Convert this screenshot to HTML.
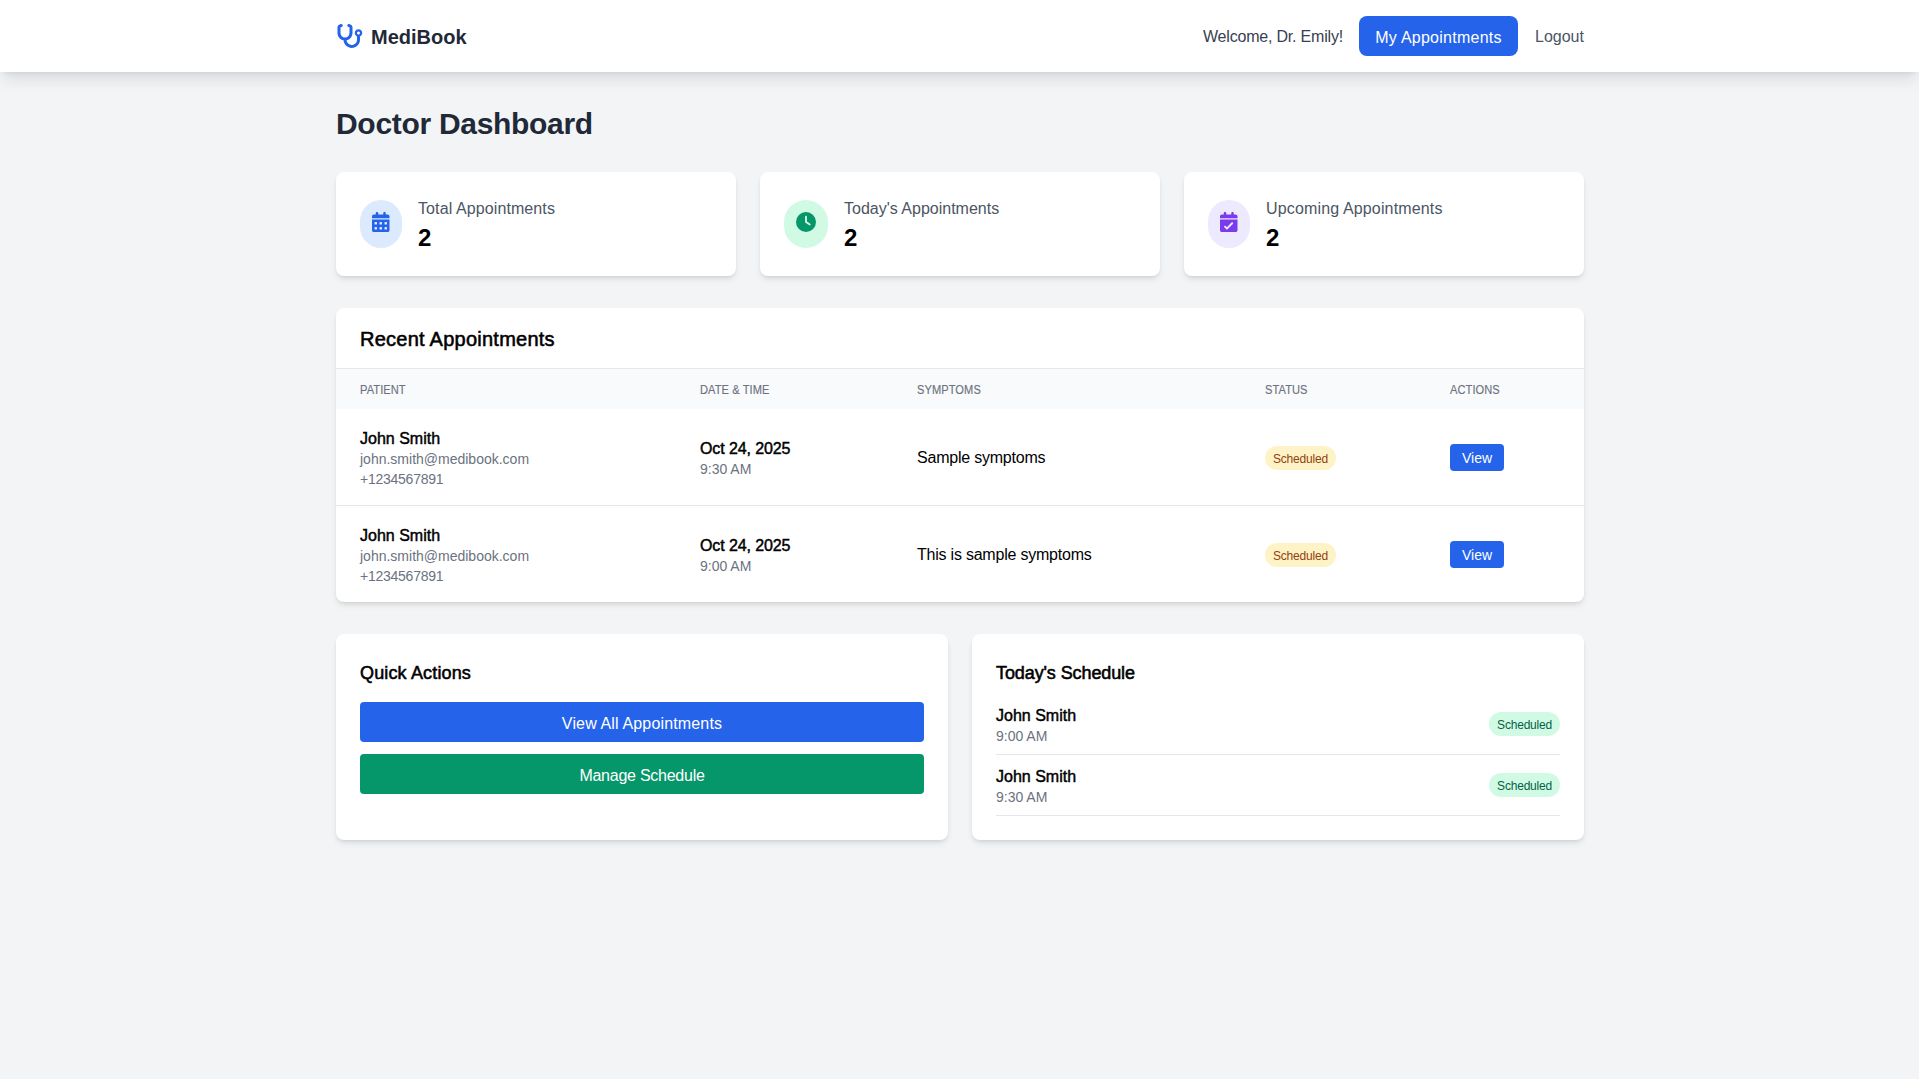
<!DOCTYPE html>
<html>
<head>
<meta charset="utf-8">
<style>
*{box-sizing:border-box;margin:0;padding:0}
html,body{width:1919px;height:1079px;overflow:hidden}
body{background:#f3f4f6;font-family:"Liberation Sans",sans-serif;color:#000;position:relative}
.nav{position:absolute;left:0;top:0;width:1919px;height:72px;background:#fff;box-shadow:0 10px 15px -3px rgba(0,0,0,.1),0 4px 6px -4px rgba(0,0,0,.1);z-index:2}
.abs{position:absolute;white-space:nowrap}
.logo-icon{position:absolute;left:336px;top:24px;width:27px;height:24px}
.brand{left:371px;top:23px;font-size:20px;font-weight:700;color:#1f2937;line-height:28px}
.welcome{left:1203px;top:25px;letter-spacing:-.2px;font-size:16px;line-height:24px;color:#374151}
.btn-nav{position:absolute;left:1359px;top:16px;width:159px;height:40px;background:#2563eb;border-radius:8px;color:#fff;font-size:16px;line-height:40px;padding-top:2px;letter-spacing:.25px;text-align:center}
.logout{left:1535px;top:25px;font-size:16px;line-height:24px;color:#4b5563}
.title{left:336px;top:106px;letter-spacing:-.3px;font-size:30px;line-height:36px;font-weight:700;color:#1f2937}
.card{position:absolute;background:#fff;border-radius:8px;box-shadow:0 4px 6px -1px rgba(0,0,0,.1),0 2px 4px -2px rgba(0,0,0,.1)}
.stat{top:172px;width:400px;height:104px}
.circ{position:absolute;top:28px;height:48px;border-radius:9999px}
.circ svg{position:absolute;top:12px;height:20px}
.slabel{position:absolute;top:25px;font-size:16px;line-height:24px;color:#4b5563;white-space:nowrap}
.snum{position:absolute;top:50px;font-size:24px;line-height:32px;font-weight:700;color:#000}

.rc{left:336px;top:308px;width:1248px;height:294px;overflow:hidden}
.rc-h{position:absolute;left:0;top:0;width:1248px;height:61px;border-bottom:1px solid #e5e7eb}
.h2{position:absolute;font-size:20px;line-height:28px;font-weight:400;color:#000;-webkit-text-stroke:.55px #000;white-space:nowrap}
.thead{position:absolute;left:0;top:61px;width:1248px;height:40px;background:#f9fafb}
.th{position:absolute;top:13px;font-size:12.3px;line-height:16px;color:#6b7280;letter-spacing:.1px;transform:scaleX(.9);transform-origin:0 0;-webkit-text-stroke:.15px #6b7280;white-space:nowrap}
.row{position:absolute;left:0;width:1248px;height:97px}
.row.b{border-bottom:1px solid #e5e7eb}
.nm{position:absolute;font-size:16px;line-height:24px;font-weight:400;color:#000;-webkit-text-stroke:.45px #000;margin-top:2px;white-space:nowrap}
.sub{position:absolute;font-size:14px;line-height:20px;color:#6b7280;white-space:nowrap}
.txt{position:absolute;font-size:16px;line-height:24px;color:#000;letter-spacing:-.22px;margin-top:1px;white-space:nowrap}
.badge{position:absolute;height:24px;padding:0 8px;border-radius:9999px;font-size:12px;line-height:24px;padding-top:1px;letter-spacing:-.2px;white-space:nowrap}
.by{background:#fef3c7;color:#92400e}
.bg{background:#d1fae5;color:#065f46}
.vbtn{position:absolute;width:54px;height:27px;background:#2563eb;color:#fff;border-radius:4px;font-size:14px;line-height:28px;text-align:center}
.bc{top:634px;width:612px;height:206px}
.qbtn{position:absolute;left:24px;width:564px;height:40px;border-radius:4px;color:#fff;font-size:16px;line-height:40px;padding-top:2px;text-align:center}
.sitem{position:absolute;left:24px;width:564px;border-bottom:1px solid #e5e7eb}
</style>
</head>
<body>
<div class="nav">
  <svg class="logo-icon" viewBox="0 0 576 512" fill="#2563eb"><path d="M142.4 21.9c5.6 16.8-3.5 34.9-20.2 40.5L96 71.1V192c0 53 43 96 96 96s96-43 96-96V71.1l-26.1-8.7c-16.8-5.6-25.8-23.7-20.2-40.5s23.7-25.8 40.5-20.2l26.1 8.7C334.4 19.1 352 43.5 352 71.1V192c0 77.2-54.6 141.6-127.3 156.7C231 404.6 278.4 448 336 448c61.9 0 112-50.1 112-112V265.3c-28.3-12.3-48-40.5-48-73.3c0-44.2 35.8-80 80-80s80 35.8 80 80c0 32.8-19.7 61-48 73.3V336c0 97.2-78.8 176-176 176c-92.9 0-168.9-71.9-175.5-163.1C87.2 334.2 32 269.6 32 192V71.1c0-27.5 17.6-52 43.8-60.7l26.1-8.7c16.8-5.6 34.9 3.5 40.5 20.2zM480 224a32 32 0 1 0 0-64 32 32 0 1 0 0 64z"/></svg>
  <div class="abs brand">MediBook</div>
  <div class="abs welcome">Welcome, Dr. Emily!</div>
  <div class="btn-nav">My Appointments</div>
  <div class="abs logout">Logout</div>
</div>

<div class="abs title">Doctor Dashboard</div>

<div class="card stat" style="left:336px">
  <div class="circ" style="left:24px;width:42px;background:#dbeafe">
    <svg style="left:12px;width:17.5px" viewBox="0 0 448 512" fill="#2563eb"><path d="M128 0c17.7 0 32 14.3 32 32V64H288V32c0-17.7 14.3-32 32-32s32 14.3 32 32V64h48c26.5 0 48 21.5 48 48v48H0V112C0 85.5 21.5 64 48 64H96V32c0-17.7 14.3-32 32-32zM0 192H448V464c0 26.5-21.5 48-48 48H48c-26.5 0-48-21.5-48-48V192zm64 80v32c0 8.8 7.2 16 16 16h32c8.8 0 16-7.200 16-16V272c0-8.8-7.2-16-16-16H80c-8.8 0-16 7.2-16 16zm128 0v32c0 8.8 7.2 16 16 16h32c8.8 0 16-7.2 16-16V272c0-8.8-7.2-16-16-16H208c-8.8 0-16 7.2-16 16zm144-16c-8.8 0-16 7.2-16 16v32c0 8.8 7.2 16 16 16h32c8.8 0 16-7.2 16-16V272c0-8.8-7.2-16-16-16H336zM64 400v32c0 8.8 7.2 16 16 16h32c8.8 0 16-7.2 16-16V400c0-8.8-7.2-16-16-16H80c-8.8 0-16 7.2-16 16zm144-16c-8.8 0-16 7.2-16 16v32c0 8.8 7.2 16 16 16h32c8.8 0 16-7.2 16-16V400c0-8.8-7.2-16-16-16H208zm112 16v32c0 8.8 7.2 16 16 16h32c8.8 0 16-7.2 16-16V400c0-8.8-7.2-16-16-16H336c-8.8 0-16 7.2-16 16z"/></svg>
  </div>
  <div class="slabel" style="left:82px;letter-spacing:.1px">Total Appointments</div>
  <div class="snum" style="left:82px">2</div>
</div>

<div class="card stat" style="left:760px">
  <div class="circ" style="left:24px;width:44px;background:#d1fae5">
    <svg style="left:12px;width:20px" viewBox="0 0 512 512" fill="#059669"><path d="M256 0a256 256 0 1 1 0 512A256 256 0 1 1 256 0zM232 120V256c0 8 4 15.5 10.7 20l96 64c11 7.4 25.9 4.4 33.3-6.7s4.4-25.9-6.7-33.3L280 243.2V120c0-13.3-10.7-24-24-24s-24 10.7-24 24z"/></svg>
  </div>
  <div class="slabel" style="left:84px">Today's Appointments</div>
  <div class="snum" style="left:84px">2</div>
</div>

<div class="card stat" style="left:1184px">
  <div class="circ" style="left:24px;width:42px;background:#ede9fe">
    <svg style="left:12px;width:17.5px" viewBox="0 0 448 512" fill="#7c3aed"><path d="M128 0c17.7 0 32 14.3 32 32V64H288V32c0-17.7 14.3-32 32-32s32 14.3 32 32V64h48c26.5 0 48 21.5 48 48v48H0V112C0 85.5 21.5 64 48 64H96V32c0-17.700 14.3-32 32-32zM0 192H448V464c0 26.5-21.5 48-48 48H48c-26.5 0-48-21.5-48-48V192zM329 305c9.4-9.4 9.4-24.6 0-33.9s-24.6-9.4-33.9 0l-119 119L145 359c-9.4-9.4-24.6-9.4-33.9 0s-9.4 24.6 0 33.9l48 48c9.4 9.4 24.6 9.4 33.9 0L329 305z"/></svg>
  </div>
  <div class="slabel" style="left:82px;letter-spacing:.15px">Upcoming Appointments</div>
  <div class="snum" style="left:82px">2</div>
</div>


<div class="card rc">
  <div class="rc-h"><div class="h2" style="left:24px;top:17px;letter-spacing:.25px">Recent Appointments</div></div>
  <div class="thead">
    <div class="th" style="left:24px">PATIENT</div>
    <div class="th" style="left:364px">DATE &amp; TIME</div>
    <div class="th" style="left:581px">SYMPTOMS</div>
    <div class="th" style="left:929px">STATUS</div>
    <div class="th" style="left:1114px">ACTIONS</div>
  </div>
  <div class="row b" style="top:101px">
    <div class="nm" style="left:24px;top:16px">John Smith</div>
    <div class="sub" style="left:24px;top:40px">john.smith@medibook.com</div>
    <div class="sub" style="left:24px;top:60px;letter-spacing:-.25px">+1234567891</div>
    <div class="nm" style="left:364px;top:26px;letter-spacing:-.1px">Oct 24, 2025</div>
    <div class="sub" style="left:364px;top:50px">9:30 AM</div>
    <div class="txt" style="left:581px;top:36px">Sample symptoms</div>
    <div class="badge by" style="left:929px;top:37px">Scheduled</div>
    <div class="vbtn" style="left:1114px;top:35px">View</div>
  </div>
  <div class="row" style="top:198px">
    <div class="nm" style="left:24px;top:16px">John Smith</div>
    <div class="sub" style="left:24px;top:40px">john.smith@medibook.com</div>
    <div class="sub" style="left:24px;top:60px;letter-spacing:-.25px">+1234567891</div>
    <div class="nm" style="left:364px;top:26px;letter-spacing:-.1px">Oct 24, 2025</div>
    <div class="sub" style="left:364px;top:50px">9:00 AM</div>
    <div class="txt" style="left:581px;top:36px">This is sample symptoms</div>
    <div class="badge by" style="left:929px;top:37px">Scheduled</div>
    <div class="vbtn" style="left:1114px;top:35px">View</div>
  </div>
</div>



<div class="card bc" style="left:336px">
  <div class="h2" style="left:24px;top:25px;font-size:18px;letter-spacing:.15px">Quick Actions</div>
  <div class="qbtn" style="top:68px;background:#2563eb;letter-spacing:.15px">View All Appointments</div>
  <div class="qbtn" style="top:120px;background:#059669;letter-spacing:-.25px">Manage Schedule</div>
</div>
<div class="card bc" style="left:972px">
  <div class="h2" style="left:24px;top:25px;font-size:18px;letter-spacing:-.1px">Today's Schedule</div>
  <div class="sitem" style="top:60px;height:61px">
    <div class="nm" style="left:0;top:8px">John Smith</div>
    <div class="sub" style="left:0;top:32px">9:00 AM</div>
    <div class="badge bg" style="right:0;top:18px">Scheduled</div>
  </div>
  <div class="sitem" style="top:121px;height:61px">
    <div class="nm" style="left:0;top:8px">John Smith</div>
    <div class="sub" style="left:0;top:32px">9:30 AM</div>
    <div class="badge bg" style="right:0;top:18px">Scheduled</div>
  </div>
</div>


</body>
</html>
